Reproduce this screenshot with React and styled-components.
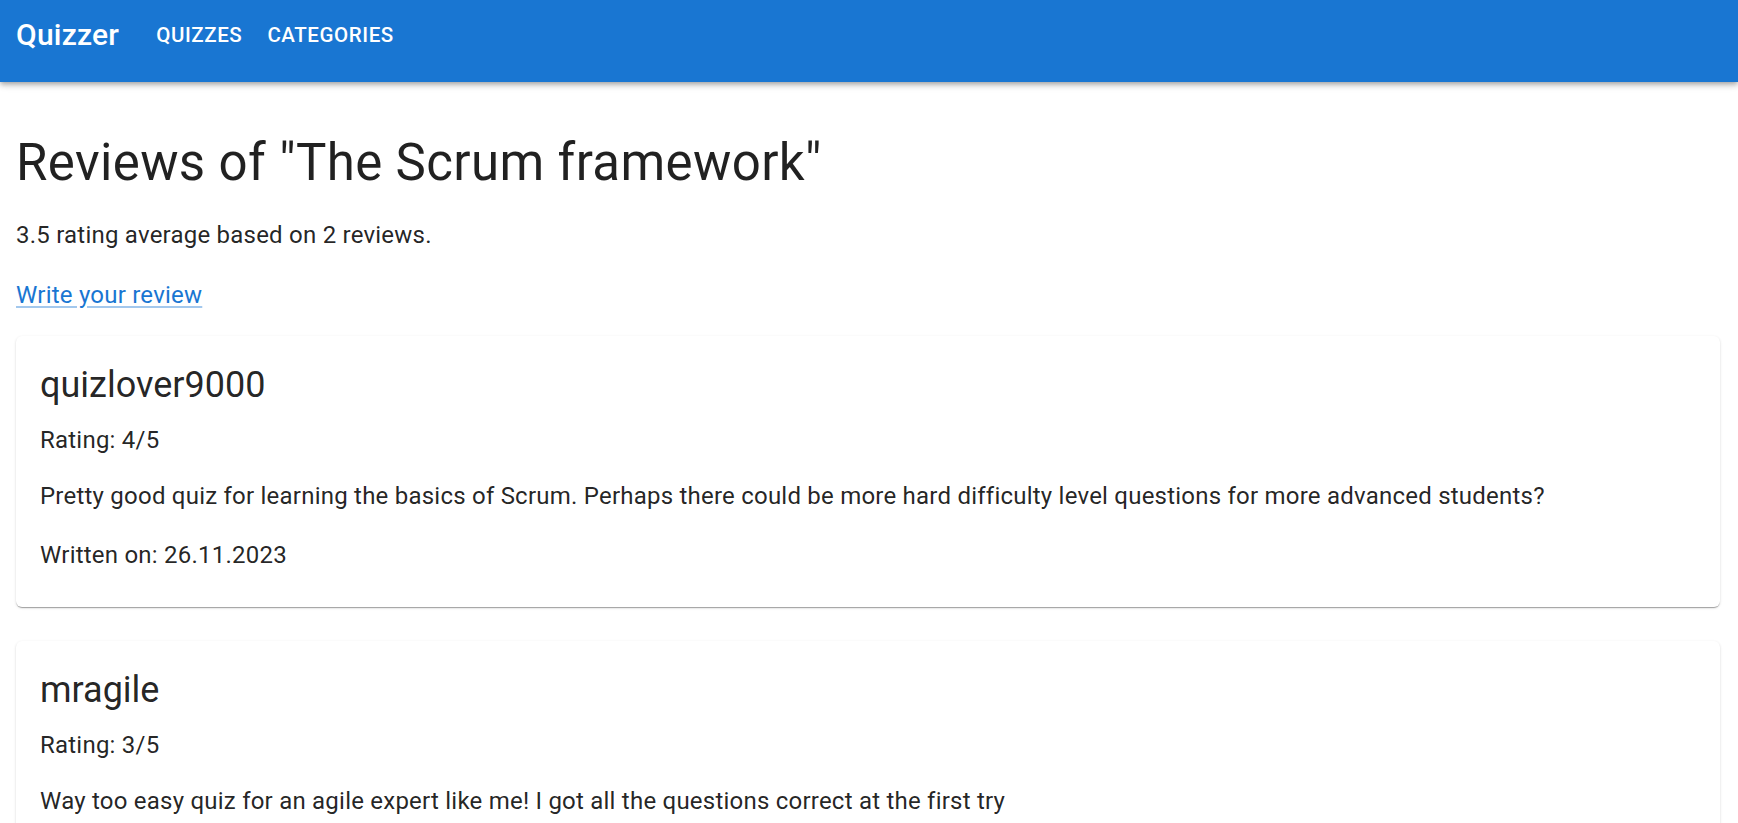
import React from "react";
import styled, { createGlobalStyle } from "styled-components";

const GlobalStyle = createGlobalStyle`
  html, body { margin: 0; padding: 0; background: #fff; }
  body {
    font-family: Roboto, "Noto Sans", "Liberation Sans", sans-serif;
    color: rgba(0, 0, 0, 0.87);
    -webkit-font-smoothing: antialiased;
  }
  * { box-sizing: border-box; }
`;

const AppBar = styled.header`
  height: 82px;
  background: #1976d2;
  color: #fff;
  box-shadow: 0px 2px 4px -1px rgba(0,0,0,0.2), 0px 4px 5px 0px rgba(0,0,0,0.14), 0px 1px 10px 0px rgba(0,0,0,0.12);
  display: flex;
  align-items: flex-start;
  padding: 15px 16px 0;
  position: relative;
  z-index: 2;
`;

const Logo = styled.div`
  font-size: 30px;
  font-weight: 500;
  letter-spacing: 0.0075em;
  line-height: 40px;
  margin-right: 37px;
`;

const Nav = styled.nav`
  display: flex;
  gap: 25px;
  padding-top: 3px;
`;

const NavLink = styled.a`
  font-size: 20.5px;
  font-weight: 500;
  letter-spacing: 0.02857em;
  text-transform: uppercase;
  line-height: 34px;
  color: #fff;
  text-decoration: none;
  cursor: pointer;
`;

const Main = styled.main`
  padding: 49px 18px 40px 16px;
`;

const Title = styled.h1`
  margin: 0 0 23px;
  font-size: 51px;
  font-weight: 400;
  letter-spacing: 0.00735em;
  line-height: 63px;
`;

const Body = styled.p`
  margin: 0 0 ${(p) => p.$mb ?? 0}px;
  font-size: 24px;
  line-height: 36px;
  font-weight: 400;
  letter-spacing: 0.00938em;
`;

const ReviewLink = styled.a`
  display: inline-block;
  font-size: 24px;
  line-height: 36px;
  letter-spacing: 0.00938em;
  color: #1976d2;
  text-decoration: underline;
  text-decoration-color: rgba(25, 118, 210, 0.4);
  text-underline-offset: 3px;
  cursor: pointer;
`;

const LinkRow = styled.div`
  margin-bottom: 23px;
  padding-top: 1px;
  line-height: 0;
`;

const List = styled.div`
  display: flex;
  flex-direction: column;
  gap: 34px;
`;

const Card = styled.article`
  background: #fff;
  border-radius: 6px;
  box-shadow: 0px 2px 1px -1px rgba(0,0,0,0.2), 0px 1px 1px 0px rgba(0,0,0,0.14), 0px 1px 3px 0px rgba(0,0,0,0.12);
  padding: 25px 24px 34px;
`;

const Name = styled.h2`
  margin: 0 0 13px;
  font-size: 36px;
  font-weight: 400;
  line-height: 48px;
`;

const reviews = [
  {
    user: "quizlover9000",
    rating: 4,
    text: "Pretty good quiz for learning the basics of Scrum. Perhaps there could be more hard difficulty level questions for more advanced students?",
    date: "26.11.2023",
  },
  {
    user: "mragile",
    rating: 3,
    text: "Way too easy quiz for an agile expert like me! I got all the questions correct at the first try",
    date: "25.11.2023",
  },
];

export default function App() {
  return (
    <>
      <GlobalStyle />
      <AppBar>
        <Logo>Quizzer</Logo>
        <Nav>
          <NavLink>Quizzes</NavLink>
          <NavLink>Categories</NavLink>
        </Nav>
      </AppBar>
      <Main>
        <Title>Reviews of "The Scrum framework"</Title>
        <Body $mb={23}>3.5 rating average based on 2 reviews.</Body>
        <LinkRow>
          <ReviewLink>Write your review</ReviewLink>
        </LinkRow>
        <List>
          {reviews.map((r) => (
            <Card key={r.user}>
              <Name>{r.user}</Name>
              <Body $mb={20}>Rating: {r.rating}/5</Body>
              <Body $mb={23}>{r.text}</Body>
              <Body>Written on: {r.date}</Body>
            </Card>
          ))}
        </List>
      </Main>
    </>
  );
}
